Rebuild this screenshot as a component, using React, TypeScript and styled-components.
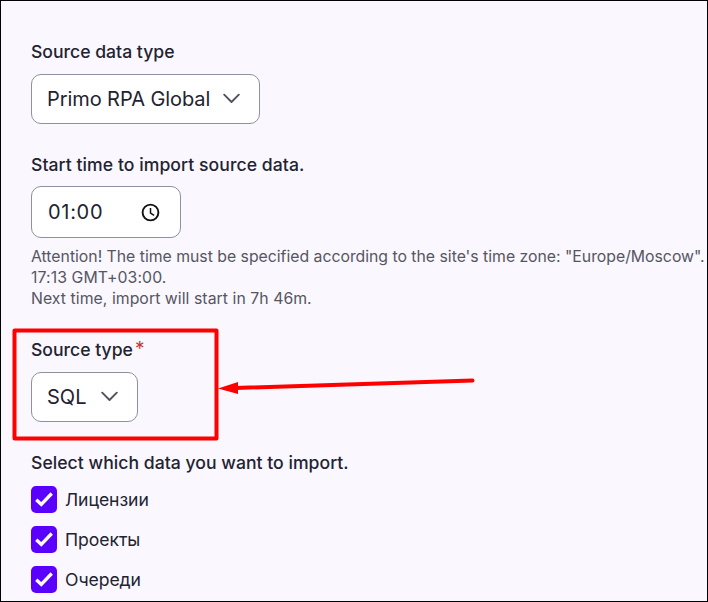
import React from "react";
import styled, { createGlobalStyle } from "styled-components";

const GlobalStyle = createGlobalStyle`
  * { box-sizing: border-box; }
  body { margin: 0; background: #faf7ff; overflow: hidden; }
`;

const Page = styled.main`
  position: relative;
  width: 708px;
  height: 602px;
  padding: 39px 0 0 30px;
  border: 1px solid #000;
  background: #faf7ff;
  color: #222330;
  font-family: Inter, sans-serif;
  white-space: nowrap;
  overflow: hidden;
`;

const Field = styled.section<{ $gap: number; $after: number }>`
  display: flex;
  flex-direction: column;
  align-items: flex-start;
  gap: ${(p) => p.$gap}px;
  margin-bottom: ${(p) => p.$after}px;
`;

const Label = styled.div<{ $tracking?: number }>`
  font-size: 17.6px;
  font-weight: 500;
  line-height: 24px;
  letter-spacing: ${(p) => p.$tracking ?? 0}px;
`;

const Required = styled.sup`
  margin-left: 2px;
  color: #c93434;
  font-size: 19px;
  font-weight: 400;
  line-height: 0;
  vertical-align: 1px;
`;

const Control = styled.button<{ $width: number; $height?: number; $tracking?: number }>`
  display: flex;
  align-items: center;
  justify-content: space-between;
  width: ${(p) => p.$width}px;
  height: ${(p) => p.$height ?? 50}px;
  padding: 0 19px 0 15px;
  border: 1px solid #8e929c;
  border-radius: 10px;
  background: #fff;
  color: #222330;
  font: 400 20px/30px Inter, sans-serif;
  letter-spacing: ${(p) => p.$tracking ?? 0}px;
`;

const TimeControl = styled(Control)`
  padding: 0 20px 0 16px;
`;

const Help = styled.p`
  margin: -1px 0 0;
  color: #55565f;
  font-size: 15.8px;
  line-height: 21px;
`;

const HelpLine = styled.span<{ $tracking?: number }>`
  display: block;
  letter-spacing: ${(p) => p.$tracking ?? 0}px;
`;

const CheckList = styled.div`
  display: flex;
  flex-direction: column;
  gap: 13px;
`;

const CheckRow = styled.label`
  display: flex;
  align-items: center;
  gap: 8px;
  height: 27px;
  font-size: 17.6px;
  line-height: 27px;
  letter-spacing: -0.06px;
`;

const CheckBox = styled.span`
  display: flex;
  width: 26px;
  height: 27px;
  border-radius: 5px;
  background: #5b00ff;
`;

const Annotation = styled.svg`
  position: absolute;
  left: -1px;
  top: -1px;
  pointer-events: none;
`;

const Chevron = () => (
  <svg width="17" height="12" viewBox="0 0 17 12" fill="none">
    <path d="M1.2 1.7 8.5 9l7.3-7.3" stroke="#51525c" strokeWidth="1.9" strokeLinecap="round" strokeLinejoin="round" />
  </svg>
);

const Clock = () => (
  <svg width="20" height="20" viewBox="0 0 20 20" fill="none" stroke="#111">
    <circle cx="10.5" cy="10.5" r="7.9" strokeWidth="1.9" />
    <path d="M10.5 6v5l3.6 2.4" strokeWidth="1.5" />
  </svg>
);

const Tick = () => (
  <svg width="26" height="27" viewBox="0 0 26 27" fill="none">
    <path d="m5.3 13.7 5 4.8L20.7 7.5" stroke="#fff" strokeWidth="3.3" />
  </svg>
);

export default function App() {
  return (
    <>
      <GlobalStyle />
      <Page>
        <Field $gap={10} $after={29}>
          <Label>Source data type</Label>
          <Control $width={229} $tracking={-0.08}>Primo RPA Global <Chevron /></Control>
        </Field>
        <Field $gap={9} $after={29}>
          <Label $tracking={0.06}>Start time to import source data.</Label>
          <TimeControl $width={150} $height={52} $tracking={0.7}>01:00 <Clock /></TimeControl>
          <Help>
            <HelpLine $tracking={-0.01}>Attention! The time must be specified according to the site's time zone: "Europe/Moscow".</HelpLine>
            <HelpLine $tracking={0.1}>17:13 GMT+03:00.</HelpLine>
            <HelpLine $tracking={0.05}>Next time, import will start in 7h 46m.</HelpLine>
          </Help>
        </Field>
        <Field $gap={10} $after={29}>
          <Label>Source type<Required>*</Required></Label>
          <Control $width={107}>SQL <Chevron /></Control>
        </Field>
        <Field $gap={11} $after={0}>
          <Label $tracking={0.03}>Select which data you want to import.</Label>
          <CheckList>
            {["Лицензии", "Проекты", "Очереди"].map((name) => (
              <CheckRow key={name}><CheckBox><Tick /></CheckBox>{name}</CheckRow>
            ))}
          </CheckList>
        </Field>
        <Annotation width="708" height="602" viewBox="0 0 708 602" fill="none">
          <rect x="14.5" y="330.5" width="202" height="108" stroke="#f00" strokeWidth="4" strokeLinejoin="round" />
          <path d="M236 388 472.5 380.5" stroke="#f00" strokeWidth="4" strokeLinecap="round" />
          <path d="m218 388.5 20-6.5v12z" fill="#f00" />
        </Annotation>
      </Page>
    </>
  );
}
